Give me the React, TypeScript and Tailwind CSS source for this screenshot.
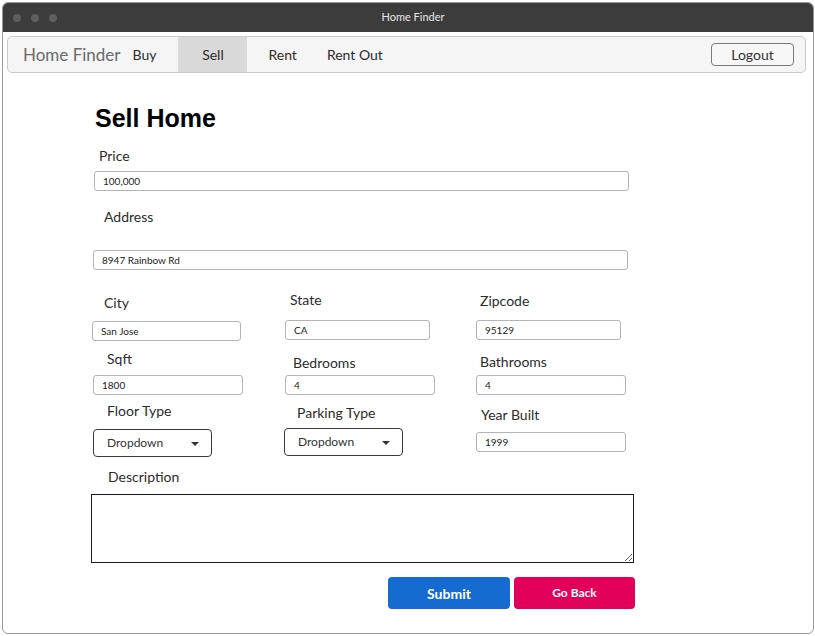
import React from 'react'

const sans = "font-['Lato',sans-serif]"

function TextInput({ value, className }: { value: string; className: string }) {
  return (
    <div
      className={`h-[20px] border border-[#b4b4b4] rounded-[3px] bg-white flex items-center px-[8px] text-[10px] text-[#222] ${className}`}
    >
      {value}
    </div>
  )
}

function Dropdown({ className }: { className: string }) {
  return (
    <div
      className={`h-[28px] w-[119px] border border-[#3a3a3a] rounded-[4px] bg-white flex items-center justify-between pl-[13px] pr-[12px] text-[12px] text-[#333] ${className}`}
    >
      <span>Dropdown</span>
      <span className="mt-[2px] w-0 h-0 border-l-[4px] border-r-[4px] border-t-[4px] border-l-transparent border-r-transparent border-t-[#333]" />
    </div>
  )
}

export default function App() {
  return (
    <div className={`w-[815px] h-[636px] bg-white pt-[2px] pl-[2px] ${sans}`}>
      <div className="w-[812px] h-[632px] border border-[#9a9a9a] rounded-[6px] overflow-hidden flex flex-col bg-white">
        {/* Title bar */}
        <div className="h-[29px] bg-[#3c3c3c] flex items-center relative shrink-0">
          <div className="flex gap-[10px] pl-[10px]">
            <span className="w-[8px] h-[8px] rounded-full bg-[#5e5e5e]" />
            <span className="w-[8px] h-[8px] rounded-full bg-[#5e5e5e]" />
            <span className="w-[8px] h-[8px] rounded-full bg-[#5e5e5e]" />
          </div>
          <span className="absolute left-[10px] right-0 text-center text-[11px] text-[#e6e6e6]">Home Finder</span>
        </div>

        <div className="pl-[4px] pt-[4px]">
          {/* Nav */}
          <div className="w-[799px] h-[37px] border border-[#c8c8c8] rounded-[5px] bg-[#f5f5f5] flex items-stretch overflow-hidden">
            <span className="self-center ml-[15px] text-[17px] text-[#6a6a6a]">Home Finder</span>
            <span className="self-center ml-[12px] text-[14px] text-[#2b2b2b]">Buy</span>
            <span className="ml-[22px] w-[69px] bg-[#d9d9d9] flex items-center justify-center text-[14px] text-[#2b2b2b]">
              Sell
            </span>
            <span className="self-center ml-[21px] text-[14px] text-[#2b2b2b]">Rent</span>
            <span className="self-center ml-[30px] text-[14px] text-[#2b2b2b]">Rent Out</span>
            <button className="self-center ml-auto mr-[11px] w-[83px] h-[23px] border border-[#7a7a7a] rounded-[4px] bg-[#f7f7f7] text-[14px] text-[#333]">
              Logout
            </button>
          </div>
        </div>

        {/* Form */}
        <div className="pl-[88px] w-[640px] text-[14px] text-[#2b2b2b]">
          <h1 className="mt-[30px] ml-[4px] h-[30px] leading-[30px] text-[25px] font-bold text-black font-['Liberation_Sans',Arial,sans-serif]">
            Sell Home
          </h1>

          <div className="mt-[14px] ml-[8px] leading-[18px]">Price</div>
          <TextInput value="100,000" className="mt-[6px] ml-[3px] w-[535px]" />

          <div className="mt-[17px] ml-[13px] leading-[18px]">Address</div>
          <TextInput value="8947 Rainbow Rd" className="mt-[24px] ml-[2px] w-[535px]" />

          {/* Row: City / State / Zipcode */}
          <div className="flex mt-[21px]">
            <div className="w-[194px]">
              <div className="mt-[3px] ml-[13px] leading-[18px]">City</div>
              <TextInput value="San Jose" className="mt-[9px] ml-[1px] w-[149px]" />
            </div>
            <div className="w-[191px]">
              <div className="ml-[5px] leading-[18px]">State</div>
              <TextInput value="CA" className="mt-[11px] w-[145px]" />
            </div>
            <div>
              <div className="mt-[1px] ml-[4px] leading-[18px]">Zipcode</div>
              <TextInput value="95129" className="mt-[10px] w-[145px]" />
            </div>
          </div>

          {/* Row: Sqft / Bedrooms / Bathrooms */}
          <div className="flex mt-[9px]">
            <div className="w-[194px]">
              <div className="ml-[16px] leading-[18px]">Sqft</div>
              <TextInput value="1800" className="mt-[7px] ml-[2px] w-[150px]" />
            </div>
            <div className="w-[191px]">
              <div className="mt-[4px] ml-[8px] leading-[18px]">Bedrooms</div>
              <TextInput value="4" className="mt-[3px] w-[150px]" />
            </div>
            <div>
              <div className="mt-[3px] ml-[4px] leading-[18px]">Bathrooms</div>
              <TextInput value="4" className="mt-[4px] w-[150px]" />
            </div>
          </div>

          {/* Row: Floor Type / Parking Type / Year Built */}
          <div className="flex mt-[7px]">
            <div className="w-[194px]">
              <div className="ml-[16px] leading-[18px]">Floor Type</div>
              <Dropdown className="mt-[9px] ml-[2px]" />
            </div>
            <div className="w-[191px]">
              <div className="mt-[2px] ml-[12px] leading-[18px]">Parking Type</div>
              <Dropdown className="mt-[6px] -ml-[1px]" />
            </div>
            <div>
              <div className="mt-[4px] ml-[5px] leading-[18px]">Year Built</div>
              <TextInput value="1999" className="mt-[8px] w-[150px]" />
            </div>
          </div>

          <div className="mt-[11px] ml-[17px] leading-[18px]">Description</div>
          <textarea className="block mt-[8px] w-[543px] h-[69px] border border-[#1a1a1a] bg-white outline-none" />

          <div className="flex justify-end gap-[4px] mt-[14px] w-[544px]">
            <button className="w-[122px] h-[32px] rounded-[4px] bg-[#166bd1] text-white font-bold text-[14px]">
              Submit
            </button>
            <button className="w-[121px] h-[32px] rounded-[4px] bg-[#e3005a] text-white font-bold text-[12px]">
              Go Back
            </button>
          </div>
        </div>
      </div>
    </div>
  )
}
